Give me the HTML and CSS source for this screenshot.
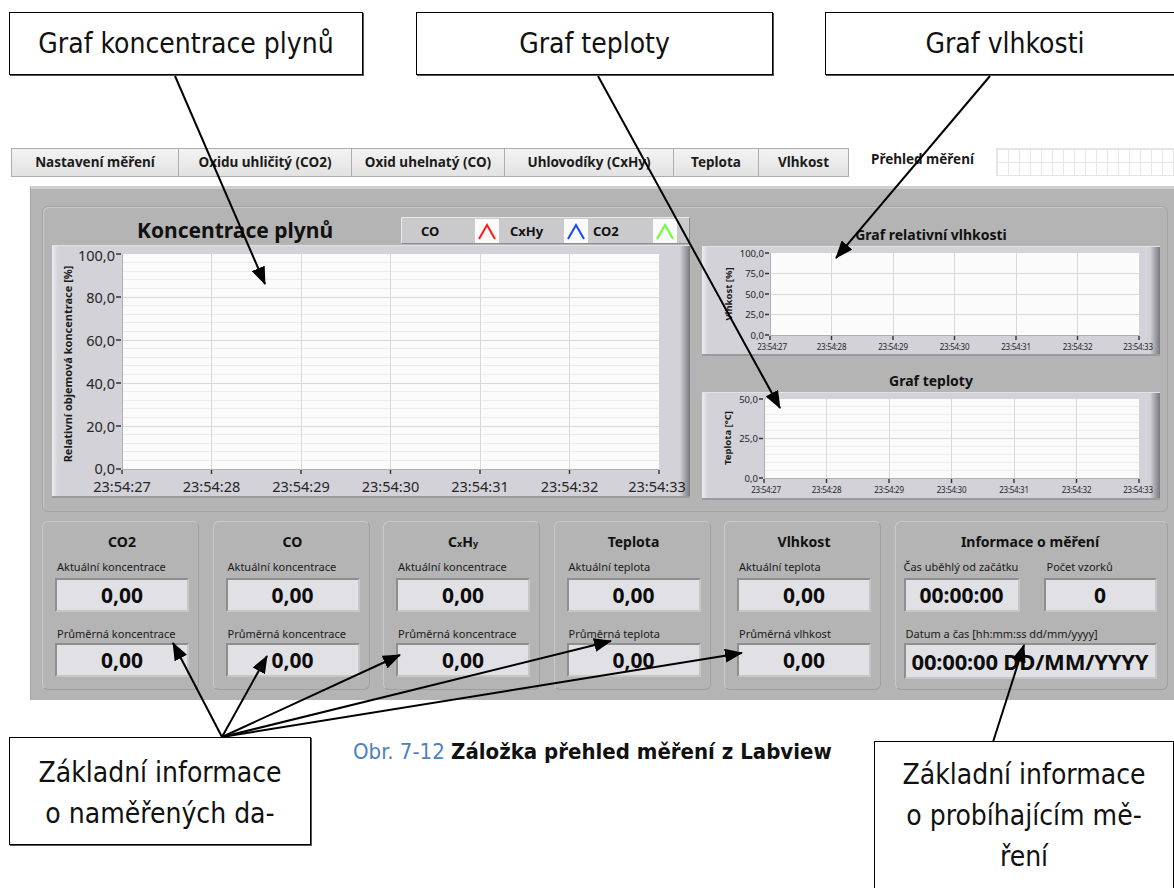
FILE: index.html
```html
<!DOCTYPE html>
<html>
<head>
<meta http-equiv="Content-type" content="text/html; charset=UTF-8">
<title>Záložka přehled měření</title>
<link rel="stylesheet" href="styles.css">
</head>
<body>
<div class="page">

  <!-- popisky nahoře -->
  <div class="top-notes">
    <div class="note note-gas">Graf koncentrace plynů</div>
    <div class="note note-temp">Graf teploty</div>
    <div class="note note-hum">Graf vlhkosti</div>
  </div>

  <!-- záložky -->
  <div class="tabs">
    <div class="tab t1">Nastavení měření</div>
    <div class="tab t2">Oxidu uhličitý (CO2)</div>
    <div class="tab t3">Oxid uhelnatý (CO)</div>
    <div class="tab t4">Uhlovodíky (CxHy)</div>
    <div class="tab t5">Teplota</div>
    <div class="tab t6">Vlhkost</div>
    <div class="tab tab-on">Přehled měření</div>
    <div class="tab-grid"></div>
  </div>

  <div class="panel">
    <div class="deco">
      <div class="col-left">
        <div class="chart-head">
          <div class="big-title">Koncentrace plynů</div>
          <div class="legend">
            <span class="lg-name n1">CO</span>
            <span class="lg-icon"><svg width="22" height="22"><polyline points="3,19 11,5 19,19" fill="none" stroke="#ff1a1a" stroke-width="2"/></svg></span>
            <span class="lg-name n2">CxHy</span>
            <span class="lg-icon"><svg width="22" height="22"><polyline points="3,19 11,5 19,19" fill="none" stroke="#1447ff" stroke-width="2"/></svg></span>
            <span class="lg-name n3">CO2</span>
            <span class="lg-icon"><svg width="22" height="22"><polyline points="3,19 11,5 19,19" fill="none" stroke="#6cff2a" stroke-width="2"/></svg></span>
          </div>
        </div>
        <div class="frame frame-main">
          <svg width="636" height="250" class="chart">
            <rect x="70" y="8" width="537" height="215" fill="#fbfbfb"/>
            <path class="minor" d="M70 16.6H607M70 25.2H607M70 33.8H607M70 42.4H607M70 59.6H607M70 68.2H607M70 76.8H607M70 85.4H607M70 102.6H607M70 111.2H607M70 119.8H607M70 128.4H607M70 145.6H607M70 154.2H607M70 162.8H607M70 171.4H607M70 188.6H607M70 197.2H607M70 205.8H607M70 214.4H607"/>
            <path class="major" d="M70 51H607M70 94H607M70 137H607M70 180H607M159.5 8V223M249 8V223M338.5 8V223M428 8V223M517.5 8V223"/>
            <path class="axis" d="M70 8V223H607"/>
            <path class="tick" d="M64 8H69M64 51H69M64 94H69M64 137H69M64 180H69M64 223H69M70 224V228M159.5 224V228M249 224V228M338.5 224V228M428 224V228M517.5 224V228M607 224V228"/>
            <g class="lbl-y">
              <text x="63" y="15">100,0</text>
              <text x="63" y="57">80,0</text>
              <text x="63" y="100">60,0</text>
              <text x="63" y="143">40,0</text>
              <text x="63" y="186">20,0</text>
              <text x="63" y="228">0,0</text>
            </g>
            <g class="lbl-x">
              <text x="70" y="246">23:54:27</text>
              <text x="159.5" y="246">23:54:28</text>
              <text x="249" y="246">23:54:29</text>
              <text x="338.5" y="246">23:54:30</text>
              <text x="428" y="246">23:54:31</text>
              <text x="517.5" y="246">23:54:32</text>
              <text x="605" y="246">23:54:33</text>
            </g>
            <text class="axis-title" transform="rotate(-90)" x="-118" y="20">Relativní objemová koncentrace [%]</text>
          </svg>
        </div>
      </div>

      <div class="col-right">
        <div class="small-title t-hum">Graf relativní vlhkosti</div>
        <div class="frame frame-hum">
          <svg width="456" height="107" class="chart">
            <rect x="68" y="6" width="369" height="82" fill="#fbfbfb"/>
            <path class="major" d="M68 26.5H437M68 47H437M68 67.5H437M129.5 6V88M191 6V88M252.5 6V88M314 6V88M375.5 6V88"/>
            <path class="axis" d="M68 6V88H437"/>
            <path class="tick" d="M63 6H67M63 26.5H67M63 47H67M63 67.5H67M63 88H67M68 89V93M129.5 89V93M191 89V93M252.5 89V93M314 89V93M375.5 89V93M437 89V93"/>
            <g class="lbl-y small">
              <text x="62" y="9.5">100,0</text>
              <text x="62" y="30">75,0</text>
              <text x="62" y="50.5">50,0</text>
              <text x="62" y="71">25,0</text>
              <text x="62" y="91.5">0,0</text>
            </g>
            <g class="lbl-x tiny">
              <text x="70" y="103">23:54:27</text>
              <text x="129.5" y="103">23:54:28</text>
              <text x="191" y="103">23:54:29</text>
              <text x="252.5" y="103">23:54:30</text>
              <text x="314" y="103">23:54:31</text>
              <text x="375.5" y="103">23:54:32</text>
              <text x="436" y="103">23:54:33</text>
            </g>
            <text class="axis-title small" transform="rotate(-90)" x="-47" y="30">Vlhkost [%]</text>
          </svg>
        </div>
        <div class="small-title t-temp">Graf teploty</div>
        <div class="frame frame-temp">
          <svg width="456" height="105" class="chart">
            <rect x="62" y="6" width="375" height="79" fill="#fbfbfb"/>
            <path class="minor" d="M62 13.9H437M62 21.8H437M62 29.7H437M62 37.6H437M62 53.4H437M62 61.3H437M62 69.2H437M62 77.1H437"/>
            <path class="major" d="M62 45.5H437M124.5 6V85M187 6V85M249.5 6V85M312 6V85M374.5 6V85"/>
            <path class="axis" d="M62 6V85H437"/>
            <path class="tick" d="M57 6H61M57 45.5H61M57 85H61M62 86V90M124.5 86V90M187 86V90M249.5 86V90M312 86V90M374.5 86V90M437 86V90"/>
            <g class="lbl-y small">
              <text x="56" y="9.5">50,0</text>
              <text x="56" y="49">25,0</text>
              <text x="56" y="88.5">0,0</text>
            </g>
            <g class="lbl-x tiny">
              <text x="64" y="100">23:54:27</text>
              <text x="124.5" y="100">23:54:28</text>
              <text x="187" y="100">23:54:29</text>
              <text x="249.5" y="100">23:54:30</text>
              <text x="312" y="100">23:54:31</text>
              <text x="374.5" y="100">23:54:32</text>
              <text x="436" y="100">23:54:33</text>
            </g>
            <text class="axis-title small" transform="rotate(-90)" x="-45" y="29">Teplota [°C]</text>
          </svg>
        </div>
      </div>
    </div>

    <div class="gauges">
      <div class="gauge">
        <div class="g-title">CO2</div>
        <div class="g-label">Aktuální koncentrace</div>
        <div class="g-value">0,00</div>
        <div class="g-label second">Průměrná koncentrace</div>
        <div class="g-value low">0,00</div>
      </div>
      <div class="gauge">
        <div class="g-title">CO</div>
        <div class="g-label">Aktuální koncentrace</div>
        <div class="g-value">0,00</div>
        <div class="g-label second">Průměrná koncentrace</div>
        <div class="g-value low">0,00</div>
      </div>
      <div class="gauge">
        <div class="g-title">C<small>x</small>H<small>y</small></div>
        <div class="g-label">Aktuální koncentrace</div>
        <div class="g-value">0,00</div>
        <div class="g-label second">Průměrná koncentrace</div>
        <div class="g-value low">0,00</div>
      </div>
      <div class="gauge">
        <div class="g-title">Teplota</div>
        <div class="g-label">Aktuální teplota</div>
        <div class="g-value">0,00</div>
        <div class="g-label second">Průměrná teplota</div>
        <div class="g-value low">0,00</div>
      </div>
      <div class="gauge">
        <div class="g-title">Vlhkost</div>
        <div class="g-label">Aktuální teplota</div>
        <div class="g-value">0,00</div>
        <div class="g-label second">Průměrná vlhkost</div>
        <div class="g-value low">0,00</div>
      </div>
      <div class="gauge info">
        <div class="g-title">Informace o měření</div>
        <div class="info-row">
          <div class="info-cell c-time">
            <div class="g-label">Čas uběhlý od začátku</div>
            <div class="g-value">00:00:00</div>
          </div>
          <div class="info-cell c-count">
            <div class="g-label">Počet vzorků</div>
            <div class="g-value">0</div>
          </div>
        </div>
        <div class="g-label second">Datum a čas [hh:mm:ss dd/mm/yyyy]</div>
        <div class="g-value low date">00:00:00 DD/MM/YYYY</div>
      </div>
    </div>
  </div>

  <!-- popisky dole -->
  <div class="bottom">
    <div class="note note-data">Základní informace<br>o naměřených da-</div>
    <div class="caption"><span class="cap-num">Obr. 7-12</span> <b>Záložka přehled měření z Labview</b></div>
    <div class="note note-run">Základní informace<br>o probíhajícím mě-<br>ření</div>
  </div>

  <!-- šipky přes obrázek -->
  <svg class="arrows" width="1174" height="888">
    <defs>
      <marker id="hrot" markerWidth="18" markerHeight="14" refX="17" refY="7" orient="auto" markerUnits="userSpaceOnUse">
        <path d="M0,0 L18,7 L0,14 z" fill="#000"/>
      </marker>
    </defs>
    <g stroke="#000" stroke-width="2" marker-end="url(#hrot)">
      <line x1="175" y1="76" x2="265" y2="284"/>
      <line x1="598" y1="76" x2="780" y2="408"/>
      <line x1="990" y1="76" x2="836" y2="258"/>
      <line x1="222" y1="737" x2="173" y2="643"/>
      <line x1="222" y1="737" x2="267" y2="656"/>
      <line x1="222" y1="737" x2="400" y2="655"/>
      <line x1="222" y1="737" x2="611" y2="641"/>
      <line x1="222" y1="737" x2="742" y2="653"/>
      <line x1="993" y1="742" x2="1024" y2="645"/>
    </g>
  </svg>
</div>
</body>
</html>
```

FILE: styles.css
```css
body {margin:0;background:#fff;font-family:"Noto Sans", "Open Sans", sans-serif;color:#111;}
.page {position:relative;width:1174px;height:888px;overflow:hidden;}

/* popisky (obdélníky s textem) */
.note {
  box-sizing:border-box;
  flex-shrink:0;
  background:#fff;
  border:1px solid #000;
  box-shadow:1px 1px 0 #555;
  font-family:"Liberation Sans Narrow", "DejaVu Sans Condensed", sans-serif;
  font-size:28px;
  color:#111;
  text-align:center;
}
.top-notes {display:flex;padding-top:12px;height:63px;}
.top-notes .note {height:63px;line-height:61px;}
.note-gas {margin-left:9px;width:354px;}
.note-temp {margin-left:53px;width:357px;}
.note-hum {margin-left:52px;width:360px;}

/* záložky */
.tabs {display:flex;margin-top:73px;margin-left:11px;height:29px;overflow:hidden;}
.tab {
  box-sizing:border-box;
  flex-shrink:0;
  height:29px;
  line-height:27px;
  border:1px solid #adadad;
  border-right:none;
  background:linear-gradient(#f3f3f3, #e2e2e2);
  font-weight:bold;
  font-size:13.5px;
  text-align:center;
  color:#1b1b1b;
}
.t1 {width:167px;}
.t2 {width:173px;}
.t3 {width:153px;}
.t4 {width:169px;}
.t5 {width:85px;}
.t6 {width:91px;border-right:1px solid #adadad;}
.tab-on {width:147px;background:#fff;border:none;line-height:22px;}
.tab-grid {
  flex:1;
  min-width:0;
  height:26px;
  border:1px solid #e4e4e4;
  background-color:#fff;
  background-image:linear-gradient(90deg, #e6e6e6 1px, transparent 1px), linear-gradient(#e6e6e6 1px, transparent 1px);
  background-size:11px 100%, 100% 13px;
}

/* hlavní panel */
.panel {
  box-sizing:border-box;
  margin-top:9px;
  margin-left:30px;
  height:514px;
  background:#b4b4b4;
  border-top:3px solid #cfcfcf;
  border-left:1px solid #a6a6a6;
  padding:17px 0 10px 11px;
}
.deco {
  box-sizing:border-box;
  display:flex;
  gap:12px;
  width:1126px;
  height:306px;
  padding:7px 7px 13px 9px;
  border:1px solid #a3a3a3;
  border-radius:6px;
  box-shadow:inset 1px 1px 0 #c9c9c9;
}
.col-left {width:638px;}
.col-right {width:458px;}

.chart-head {display:flex;justify-content:space-between;align-items:center;height:31px;}
.big-title {padding-left:85px;font-weight:bold;font-size:21px;color:#111;}
.legend {
  box-sizing:border-box;
  display:flex;align-items:center;
  width:289px;height:27px;margin-top:2px;
  padding-left:19px;
  background:#cacacd;
  border:1px solid #e9e9eb;
  border-right-color:#8d8d90;
  border-bottom-color:#8d8d90;
  font-weight:bold;font-size:13px;color:#111;
}
.lg-name.n1 {width:54px;}
.lg-name.n2 {width:54px;margin-left:11px;}
.lg-name.n3 {width:60px;margin-left:5px;}
.lg-icon {width:24px;height:24px;background:#fafafa;display:flex;align-items:center;justify-content:center;}
.lg-icon svg {display:block;}

/* rámečky grafů */
.frame {
  border-top:1px solid #e2e2e6;
  border-bottom:2px solid #9b9b9f;
  background:linear-gradient(to right, #ececf0 0, #d3d2d8 6px, #d3d2d8 calc(100% - 10px), #77777d 100%);
}
.frame svg {display:block;overflow:visible;}
.chart .minor {stroke:#ececec;stroke-width:1;shape-rendering:crispEdges;fill:none;}
.chart .major {stroke:#d9d9d9;stroke-width:1;shape-rendering:crispEdges;fill:none;}
.chart .axis {stroke:#b0b0b0;stroke-width:1;shape-rendering:crispEdges;fill:none;}
.chart .tick {stroke:#333;stroke-width:1.4;fill:none;}
.lbl-y text {text-anchor:end;font-size:14.5px;fill:#262626;font-family:"Noto Sans", sans-serif;}
.lbl-x text {text-anchor:middle;font-size:14.5px;fill:#262626;font-family:"Noto Sans", sans-serif;}
.lbl-y.small text {font-size:9.5px;}
.lbl-x.tiny text {font-size:8px;letter-spacing:-0.3px;}
.axis-title {text-anchor:middle;font-weight:bold;font-size:11px;fill:#1a1a1a;font-family:"Noto Sans", sans-serif;}
.axis-title.small {font-size:9.5px;}

.small-title {text-align:center;font-weight:bold;font-size:14px;line-height:22px;color:#111;}
.t-hum {padding-top:10px;}
.t-temp {padding-top:14px;}

/* spodní panely s hodnotami */
.gauges {
  display:grid;
  grid-template-columns:repeat(5, 157px) 273px;
  column-gap:13.5px;
  margin-top:9px;
}
.gauge {
  box-sizing:border-box;
  height:169px;
  padding:9px 9px 0 12px;
  border:1px solid #9f9f9f;
  border-top-color:#cacaca;
  border-left-color:#cacaca;
  border-radius:6px;
}
.g-title {text-align:center;font-weight:bold;font-size:14px;line-height:22px;height:22px;color:#111;}
.g-title small {font-size:9px;line-height:0;}
.g-label {margin-top:7px;padding-left:2px;font-size:11px;line-height:14px;color:#1a1a1a;white-space:nowrap;}
.g-label.second {margin-top:15px;}
.g-value {
  box-sizing:border-box;
  margin-top:4px;
  height:34px;
  line-height:30px;
  background:#e1e1e5;
  border:2px solid #c6c6c6;
  border-top-color:#8e8e8e;
  border-left-color:#8e8e8e;
  text-align:center;
  font-weight:bold;
  font-size:21px;
  color:#0d0d0d;
}
.g-value.low {margin-top:2px;}
.info {padding-left:8px;padding-right:10px;}
.info-row {display:flex;justify-content:space-between;}
.c-time {width:116px;}
.c-time .g-label {padding-left:0;}
.c-count {width:113px;}
.c-count .g-label {padding-left:3px;}
.g-value.date {height:36px;line-height:32px;font-size:22px;white-space:nowrap;letter-spacing:-0.2px;}

/* spodní popisky */
.bottom {display:flex;align-items:flex-start;}
.bottom .note {line-height:41px;}
.note-data {margin-left:9px;margin-top:37px;width:302px;height:108px;padding-top:14px;}
.caption {
  margin-left:42px;margin-top:42px;
  font-family:"Liberation Sans Narrow", "DejaVu Sans Condensed", sans-serif;
  font-size:22px;line-height:20px;color:#111;
  white-space:nowrap;
}
.cap-num {color:#4f81bd;}
.note-run {margin-left:auto;margin-top:41px;width:300px;height:160px;padding-top:12px;}

/* šipky */
.arrows {position:absolute;left:0;top:0;pointer-events:none;}
```
